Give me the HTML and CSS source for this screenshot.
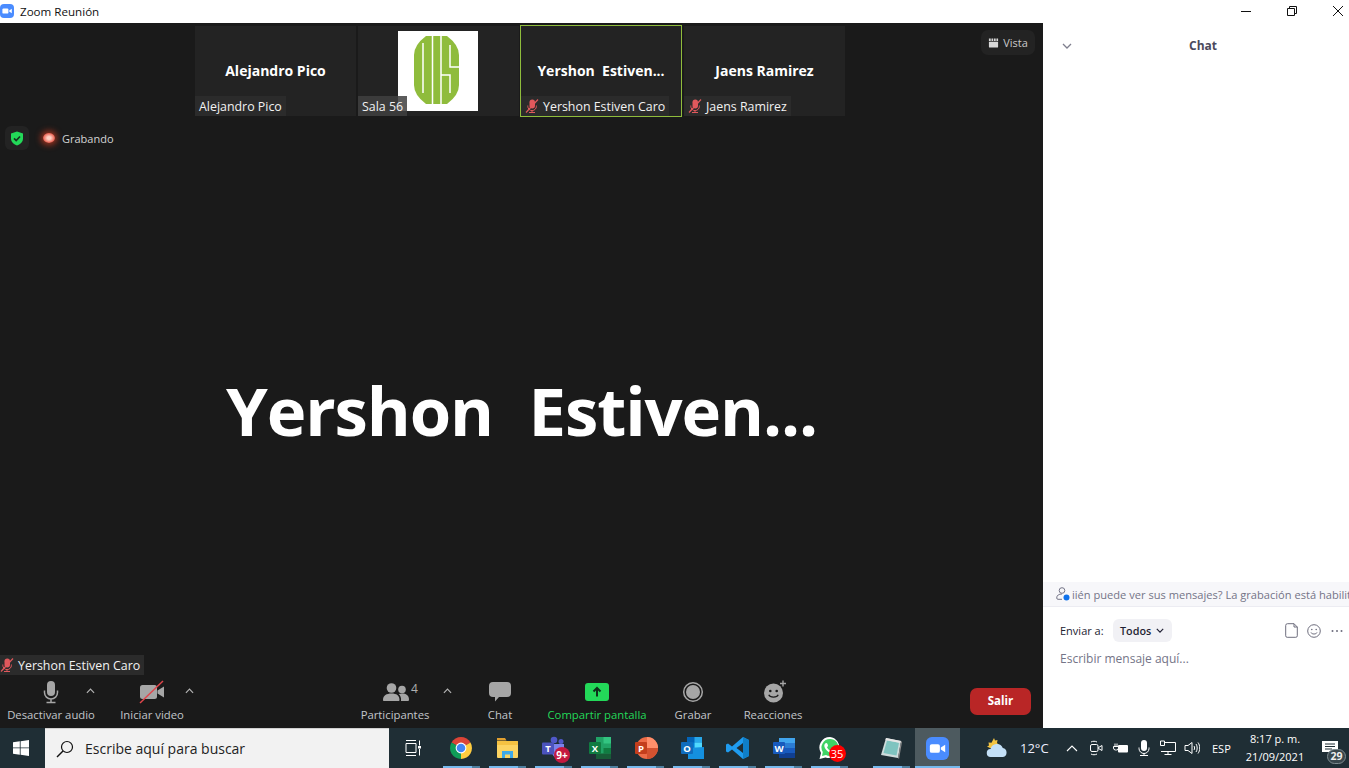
FILE: index.html
```html
<!DOCTYPE html>
<html lang="es">
<head>
<meta charset="utf-8">
<title>Zoom Reunión</title>
<link rel="stylesheet" href="styles.css">
</head>
<body>
<div class="app">
  <header class="titlebar">
    <svg class="app-icon" viewBox="0 0 14 14"><rect width="14" height="14" rx="4" fill="#4a8cff"/><rect x="2.4" y="4.4" width="6" height="5.2" rx="1.2" fill="#fff"/><path d="M9.2 6.5l2.6-1.7v4.4L9.2 7.5z" fill="#fff"/></svg>
    <span class="title-text">Zoom Reunión</span>
    <div class="win-controls">
      <svg class="win-btn" viewBox="0 0 12 12"><path d="M1 6.5h10" stroke="#111" fill="none"/></svg>
      <svg class="win-btn" viewBox="0 0 12 12"><path d="M1.5 3.5h7v7h-7zM3.5 3.500v-2h7v7h-2" stroke="#111" fill="none"/></svg>
      <svg class="win-btn" viewBox="0 0 12 12"><path d="M1 1l10 10M11 1L1 11" stroke="#111" fill="none"/></svg>
    </div>
  </header>

  <main class="main">
    <section class="stage">
      <div class="strip">
        <div class="thumb">
          <div class="thumb-name">Alejandro Pico</div>
          <div class="tag">Alejandro Pico</div>
        </div>
        <div class="thumb">
          <svg class="logo" viewBox="0 0 80 80">
            <rect width="80" height="80" fill="#fff"/>
            <path d="M28 5H49Q61 14 61 24V54Q61 64 49 73H28Q16 64 16 54V24Q16 14 28 5Z" fill="#8fbc3c"/>
            <path d="M25 12V62M34.500 4V74M43 4V74M52 14V36H62M43 44H52V62" fill="none" stroke="#fff" stroke-width="1.500"/>
          </svg>
          <div class="tag tag-glass">Sala 56</div>
        </div>
        <div class="thumb thumb-active">
          <div class="thumb-name">Yershon&nbsp; Estiven...</div>
          <div class="tag"><svg class="muted" viewBox="0 0 14 14"><rect x="4.500" y="0.500" width="5.500" height="9" rx="2.700" fill="#e0585c"/><path d="M2.800 6.500v.8a4.300 4.300 0 0 0 8.600 0v-.8M7 11.500v1.800M4 13.500h6" fill="none" stroke="#e0585c"/><path d="M13 0.500L1 13.500" stroke="#e0585c" stroke-width="1.200"/></svg>Yershon Estiven Caro</div>
        </div>
        <div class="thumb">
          <div class="thumb-name">Jaens Ramirez</div>
          <div class="tag"><svg class="muted" viewBox="0 0 14 14"><rect x="4.500" y="0.500" width="5.500" height="9" rx="2.700" fill="#e0585c"/><path d="M2.800 6.500v.8a4.300 4.300 0 0 0 8.600 0v-.8M7 11.500v1.800M4 13.500h6" fill="none" stroke="#e0585c"/><path d="M13 0.500L1 13.500" stroke="#e0585c" stroke-width="1.200"/></svg>Jaens Ramirez</div>
        </div>
      </div>

      <button class="vista">
        <svg class="vista-icon" viewBox="0 0 12 10"><path d="M1 3.500h10V9a1 1 0 0 1-1 1H2a1 1 0 0 1-1-1zM1 0h2v2.700H1zM3.800 0h1.900v2.700H3.800zM6.500 0h1.900v2.700H6.500zM9.200 0H11v2.700H9.200z" fill="#d8d8d8"/></svg>Vista
      </button>

      <div class="status">
        <div class="shield-box">
          <svg class="shield" viewBox="0 0 14 15"><path d="M7 .5L13 2.500V7.500C13 11 10 13.500 7 14.500 4 13.500 1 11 1 7.500V2.500Z" fill="#23d959"/><path d="M4 7.300l2.200 2.200 3.800-4" fill="none" stroke="#16341f" stroke-width="1.700"/></svg>
        </div>
        <span class="rec-dot"></span>
        <span class="rec-text">Grabando</span>
      </div>

      <div class="speaker"><span class="speaker-name">Yershon&nbsp; Estiven...</span></div>

      <div class="tag tag-self"><svg class="muted" viewBox="0 0 14 14"><rect x="4.500" y="0.500" width="5.500" height="9" rx="2.700" fill="#e0585c"/><path d="M2.800 6.500v.8a4.300 4.300 0 0 0 8.600 0v-.8M7 11.500v1.800M4 13.500h6" fill="none" stroke="#e0585c"/><path d="M13 0.500L1 13.500" stroke="#e0585c" stroke-width="1.200"/></svg>Yershon Estiven Caro</div>

      <div class="toolbar">
        <div class="tool tool-audio">
          <svg class="tool-icon" viewBox="0 0 26 24"><rect x="9" y="1" width="8" height="15" rx="4" fill="#a6a6a6"/><path d="M6.500 10.500v2a6.500 6.500 0 0 0 13 0v-2M13 19v3M8.500 22.500h9" fill="none" stroke="#a6a6a6" stroke-width="1.500"/></svg>
          <span class="tool-label">Desactivar audio</span>
          <svg class="caret caret-audio" viewBox="0 0 10 6"><path d="M1 5l4-4 4 4" fill="none" stroke="#b4b4b4" stroke-width="1.300"/></svg>
        </div>
        <div class="tool tool-video">
          <svg class="tool-icon" viewBox="0 0 26 24"><rect x="1" y="5" width="17" height="14" rx="2.500" fill="#a6a6a6"/><path d="M18.500 10.500L25 6.500v11l-6.500-4z" fill="#a6a6a6"/><path d="M24 1L1 23" stroke="#e0464c" stroke-width="1.500"/></svg>
          <span class="tool-label">Iniciar video</span>
          <svg class="caret caret-video" viewBox="0 0 10 6"><path d="M1 5l4-4 4 4" fill="none" stroke="#b4b4b4" stroke-width="1.300"/></svg>
        </div>
        <div class="tool tool-people">
          <svg class="tool-icon icon-people" viewBox="0 0 26 24"><circle cx="8.500" cy="8" r="4.800" fill="#a6a6a6"/><circle cx="19" cy="9.500" r="3.800" fill="#a6a6a6"/><path d="M0 20c0-4.500 3.500-6.500 8.500-6.500s8 2 8 6.500c0 .6-.4 1-1 1H1c-.6 0-1-.4-1-1zM18 21c.4-3-.6-5.500-2.300-7 1-.3 2.200-.5 3.300-.5 4 0 7 1.800 7 6 0 1-.5 1.500-1.300 1.500z" fill="#a6a6a6"/></svg>
          <span class="people-count">4</span>
          <span class="tool-label">Participantes</span>
          <svg class="caret caret-people" viewBox="0 0 10 6"><path d="M1 5l4-4 4 4" fill="none" stroke="#b4b4b4" stroke-width="1.300"/></svg>
        </div>
        <div class="tool tool-chat">
          <svg class="tool-icon" viewBox="0 0 26 24"><path d="M6 2h14a4 4 0 0 1 4 4v7a4 4 0 0 1-4 4h-8l-4 4.500V17H6a4 4 0 0 1-4-4V6a4 4 0 0 1 4-4z" fill="#a6a6a6"/></svg>
          <span class="tool-label">Chat</span>
        </div>
        <div class="tool tool-share">
          <svg class="tool-icon" viewBox="0 0 26 24"><rect x="1" y="3" width="24" height="18" rx="3" fill="#23d959"/><path d="M13 16.500V9M9.500 11.500L13 8l3.500 3.500" fill="none" stroke="#0f2e1a" stroke-width="2"/></svg>
          <span class="tool-label label-green">Compartir pantalla</span>
        </div>
        <div class="tool tool-record">
          <svg class="tool-icon" viewBox="0 0 26 24"><circle cx="13" cy="12" r="9.300" fill="none" stroke="#a6a6a6" stroke-width="1.500"/><circle cx="13" cy="12" r="7" fill="#a6a6a6"/></svg>
          <span class="tool-label">Grabar</span>
        </div>
        <div class="tool tool-react">
          <svg class="tool-icon icon-react" viewBox="0 0 26 24"><circle cx="11.500" cy="13" r="9.500" fill="#a6a6a6"/><circle cx="8.300" cy="11" r="1.300" fill="#1a1a1a"/><circle cx="14.700" cy="11" r="1.300" fill="#1a1a1a"/><path d="M6.800 14.800c1.200 3 8.200 3 9.400 0" fill="none" stroke="#1a1a1a" stroke-width="1.300"/><path d="M21 .500v6M18 3.500h6" stroke="#a6a6a6" stroke-width="1.400"/></svg>
          <span class="tool-label">Reacciones</span>
        </div>
        <button class="leave">Salir</button>
      </div>
    </section>

    <aside class="chat">
      <div class="chat-head">
        <svg class="chat-chevron" viewBox="0 0 10 6"><path d="M1 1l4 4 4-4" fill="none" stroke="#7f7f8e" stroke-width="1.300"/></svg>
        <span class="chat-title">Chat</span>
      </div>
      <div class="chat-log"></div>
      <div class="chat-notice">
        <svg class="notice-icon" viewBox="0 0 14 14"><circle cx="6" cy="3.500" r="2.800" fill="none" stroke="#747487"/><path d="M.7 11c0-2.800 2.300-4 5.300-4M.7 11c0 .8.500 1.300 1.300 1.300h4" fill="none" stroke="#747487"/><circle cx="10.500" cy="10.500" r="3" fill="#0e71eb"/></svg>
        <span class="notice-text">iién puede ver sus mensajes? La grabación está habilitada</span>
      </div>
      <div class="chat-send">
        <span class="send-label">Enviar a:</span>
        <span class="send-pill">Todos<svg class="pill-chevron" viewBox="0 0 10 6"><path d="M1 1l4 4 4-4" fill="none" stroke="#1f1f33" stroke-width="1.500"/></svg></span>
        <svg class="send-icon send-file" viewBox="0 0 13 15"><path d="M2.500.7H9L12.300 4v8.800a1.500 1.500 0 0 1-1.500 1.500H2.200A1.500 1.500 0 0 1 .7 12.800V2.500A1.800 1.800 0 0 1 2.500.7zM9 .7V4h3.300" fill="none" stroke="#6e6e7e"/></svg>
        <svg class="send-icon send-smile" viewBox="0 0 14 14"><circle cx="7" cy="7" r="6.300" fill="none" stroke="#6e6e7e"/><circle cx="4.800" cy="5.500" r=".8" fill="#6e6e7e"/><circle cx="9.200" cy="5.500" r=".8" fill="#6e6e7e"/><path d="M4 8.500c.8 2 5.200 2 6 0" fill="none" stroke="#6e6e7e"/></svg>
        <svg class="send-icon send-more" viewBox="0 0 14 14"><circle cx="2.500" cy="7" r="1" fill="#6e6e7e"/><circle cx="7" cy="7" r="1" fill="#6e6e7e"/><circle cx="11.500" cy="7" r="1" fill="#6e6e7e"/></svg>
      </div>
      <div class="chat-input">Escribir mensaje aquí...</div>
    </aside>
  </main>

  <footer class="taskbar">
    <div class="start">
      <svg class="win-logo" viewBox="0 0 16 16"><path d="M0 2.300L6.800 1.300V7.500H0zM7.600 1.200L16 0V7.500H7.600zM0 8.300H6.800V14.700L0 13.700zM7.600 8.300H16V16L7.600 14.800z" fill="#fff"/></svg>
    </div>
    <div class="search">
      <svg class="search-icon" viewBox="0 0 18 18"><circle cx="11" cy="7" r="5.500" fill="none" stroke="#111" stroke-width="1.200"/><path d="M7 11l-6 6" stroke="#111" stroke-width="1.400"/></svg>
      <span class="search-text">Escribe aquí para buscar</span>
    </div>
    <div class="task-cell task-view">
      <svg class="task-icon-sm" viewBox="0 0 16 16"><path d="M1 .5h10M1 15.500h10M1 3.500h10v9H1zM14.500 .5v5M14.500 9v6.500" fill="none" stroke="#fff"/><rect x="13" y="6" width="3" height="2.500" fill="#fff"/></svg>
    </div>
    <div class="task-cell task-first">
      <svg class="task-icon" viewBox="0 0 24 24"><path d="M12 12L2.500 6.500A11 11 0 0 1 21.500 6.500Z" fill="#db4437"/><path d="M12 12L2.500 6.500A11 11 0 0 0 12 23Z" fill="#0f9d58"/><path d="M12 12L21.500 6.500A11 11 0 0 1 12 23Z" fill="#ffcd40"/><circle cx="12" cy="12" r="5.400" fill="#fff"/><circle cx="12" cy="12" r="4.300" fill="#4285f4"/></svg>
      <span class="run-line"></span>
    </div>
    <div class="task-cell">
      <svg class="task-icon" viewBox="0 0 24 24"><path d="M2 2h8l1.500 2.500H2z" fill="#e0a030"/><path d="M2 5h20a1 1 0 0 1 1 1v15a1 1 0 0 1-1 1H3a1 1 0 0 1-1-1z" fill="#fcd462"/><path d="M2 9h21v-3a1 1 0 0 0-1-1H2z" fill="#f5c242"/><path d="M7 15h11v7h-3v-3.500h-5V22H7z" fill="#3fa9e8"/></svg>
      <span class="run-line"></span>
    </div>
    <div class="task-cell">
      <span class="badged">
        <svg class="task-icon" viewBox="0 0 24 24"><circle cx="13" cy="4" r="3.300" fill="#5059c9"/><circle cx="20" cy="5.500" r="2.500" fill="#5059c9"/><path d="M9 8h14v8a6 6 0 0 1-12 0z" fill="#7b83eb"/><rect x="1" y="6.500" width="12" height="12" rx="1" fill="#4b53bc"/><text x="7" y="16.200" class="letter">T</text></svg>
        <span class="badge badge-teams">9+</span>
      </span>
      <span class="run-line"></span>
    </div>
    <div class="task-cell task-shift">
      <svg class="task-icon" viewBox="0 0 24 24"><path d="M8 1h15v22H8z" fill="#21a366"/><path d="M15.500 1H23v6.500h-7.500z" fill="#33c481"/><path d="M15.500 12H23v5.500h-7.500z" fill="#107c41"/><path d="M8 17.500H23V23H8z" fill="#185c37"/><rect x="1" y="6" width="12" height="12" rx="1" fill="#107c41"/><text x="7" y="15.700" class="letter">X</text></svg>
      <span class="run-line"></span>
    </div>
    <div class="task-cell task-shift">
      <svg class="task-icon" viewBox="0 0 24 24"><circle cx="13" cy="12" r="11" fill="#ed6c47"/><path d="M13 1a11 11 0 0 1 11 11H13z" fill="#ff8f6b"/><path d="M13 12h11a11 11 0 0 1-11 11z" fill="#d35230"/><rect x="1" y="6" width="12" height="12" rx="1" fill="#c43e1c"/><text x="7" y="15.700" class="letter">P</text></svg>
      <span class="run-line"></span>
    </div>
    <div class="task-cell task-shift">
      <svg class="task-icon" viewBox="0 0 24 24"><path d="M7 1h15v11H7z" fill="#0364b8"/><path d="M14.500 1H22v5.500h-7.500z" fill="#28a8ea"/><path d="M7 6.500h7.500V12H7z" fill="#0078d4"/><path d="M14.500 6.500H22V12h-7.500z" fill="#50d9ff"/><path d="M8 12l16-1v12H8z" fill="#1490df"/><rect x="1" y="6" width="12" height="12" rx="1" fill="#0f6cbd"/><text x="7" y="15.700" class="letter">O</text></svg>
      <span class="run-line"></span>
    </div>
    <div class="task-cell task-shift">
      <svg class="task-icon" viewBox="0 0 24 24"><path d="M17 1l6 3v16l-6 3L6 13.500 2 16.500 0 15.500V8.500L2 7.500l4 3zM17 7l-6.500 5 6.500 5z" fill="#1f9cf0"/><path d="M17 1l6 3v16l-6 3z" fill="#0f7fc9"/></svg>
      <span class="run-line"></span>
    </div>
    <div class="task-cell task-shift">
      <svg class="task-icon" viewBox="0 0 24 24"><path d="M7 2h16v20H7z" fill="#2b7cd3"/><path d="M7 2h16v5H7z" fill="#41a5ee"/><path d="M7 12h16v5H7z" fill="#185abd"/><path d="M7 17h16v5H7z" fill="#103f91"/><rect x="1" y="6" width="12" height="12" rx="1" fill="#185abd"/><text x="7" y="15.700" class="letter">W</text></svg>
      <span class="run-line"></span>
    </div>
    <div class="task-cell task-shift">
      <span class="badged">
        <svg class="task-icon" viewBox="0 0 24 24"><path d="M12 1a10.500 10.500 0 0 0-9 16L1.500 23l6-1.600A10.500 10.500 0 1 0 12 1z" fill="#fff"/><path d="M12 3a8.500 8.500 0 0 0-7.200 13L4 20l4-1A8.500 8.500 0 1 0 12 3z" fill="#3fd365"/><path d="M8.500 7c1 0 1.500 2.500 1.500 3l-1 1.200c.6 1.400 1.800 2.600 3.300 3.300l1.200-1c.5 0 3 .7 3 1.500 0 1.500-1.500 2.300-2.800 2.200C10.500 17 6.500 13 6.300 9.800 6.300 8.500 7 7 8.500 7z" fill="#fff"/></svg>
        <span class="badge badge-wa">35</span>
      </span>
      <span class="run-line"></span>
    </div>
    <div class="task-cell task-gap">
      <svg class="task-icon" viewBox="0 0 24 24"><path d="M7 2l15 3-3 17L2 19z" fill="#cfdcdc"/><path d="M8 4.500l12 2.300-2.500 12.700L4.500 17z" fill="#7fc4c0"/><path d="M7 2l15 3-.4 2L6.500 4z" fill="#e6e6e6"/><path d="M19 22l3-17 1 1-3 17z" fill="#8a8a8a"/></svg>
      <span class="run-line"></span>
    </div>
    <div class="task-cell task-zoom">
      <svg class="task-icon task-icon-zoom" viewBox="0 0 24 24"><rect width="24" height="24" rx="6" fill="#4a8cff"/><rect x="4" y="7.500" width="10.500" height="9" rx="2" fill="#fff"/><path d="M15.500 11l4.500-3v8l-4.500-3z" fill="#fff"/></svg>
      <span class="run-line run-full"></span>
    </div>

    <div class="tray">
      <svg class="tray-weather" viewBox="0 0 24 20"><path d="M9 0l1 2.500 2.500-.5-.5 3 2 2-4 3H5L2 8.500l2-1-.5-3 3 .3z" fill="#f5c542"/><path d="M6 19a4 4 0 0 1-.5-8 6.500 6.500 0 0 1 12.300-1A4.600 4.600 0 0 1 18 19z" fill="#c4e0f7"/></svg>
      <span class="tray-temp">12°C</span>
      <svg class="tray-caret" viewBox="0 0 12 7"><path d="M1 6l5-5 5 5" fill="none" stroke="#fff" stroke-width="1.100"/></svg>
      <svg class="tray-icon" viewBox="0 0 16 16"><rect x="2.500" y="4.500" width="7.500" height="7" rx="1.500" fill="none" stroke="#fff"/><path d="M10.500 7.500l3.500-2v5l-3.500-2zM3 2c1.500-1 4.500-1 6 0M3 14c1.500 1 4.500 1 6 0" fill="none" stroke="#fff"/></svg>
      <svg class="tray-icon" viewBox="0 0 16 16"><path d="M3 3.500v3M5 3.500v3M1.500 6.500h5v1.500a2 2 0 0 1-2 2H3.500a2 2 0 0 1-2-2z" fill="none" stroke="#fff"/><rect x="6" y="5" width="10" height="7.500" rx="1" fill="#fff"/></svg>
      <svg class="tray-icon" viewBox="0 0 16 16"><rect x="5" y="0" width="6" height="11" rx="3" fill="#fff"/><path d="M3 7.500v1a5 5 0 0 0 10 0v-1M8 13v2M4 15.500h8" fill="none" stroke="#fff"/></svg>
      <svg class="tray-icon" viewBox="0 0 16 16"><path d="M5 2.500h10.500v9H1M8 11.500v3M4.500 14.500h7M.5 1h4v4.500h-4z" fill="none" stroke="#fff"/></svg>
      <svg class="tray-icon" viewBox="0 0 16 16"><path d="M1 5.500h3l4-3v11l-4-3H1zM10 6c.8 1 .8 3 0 4M12 4c1.600 2 1.600 6 0 8M14 2.500c2.300 3 2.300 8 0 11" fill="none" stroke="#fff"/></svg>
      <span class="tray-lang">ESP</span>
      <div class="clock"><span>8:17 p. m.</span><span>21/09/2021</span></div>
      <div class="notif">
        <svg class="notif-icon" viewBox="0 0 16 16"><path d="M0 1h16v11h-5l-3 3v-3H0z" fill="#fff"/><path d="M3 4h10M3 6.500h10M3 9h7" stroke="#1f2e35"/></svg>
        <span class="notif-count">29</span>
      </div>
    </div>
  </footer>
</div>
</body>
</html>
```
FILE: styles.css
```css
* { box-sizing: border-box; }
html, body { margin: 0; height: 100%; overflow: hidden; }
body { font-family: "Open Sans", "Noto Sans", sans-serif; }
svg { display: block; flex: none; }
button { font: inherit; border: 0; padding: 0; }

.app { width: 1349px; height: 768px; display: flex; flex-direction: column; }

/* Title bar */
.titlebar { height: 23px; background: #fff; display: flex; align-items: center; flex: none; }
.app-icon { width: 14px; height: 14px; margin-bottom: 1px; }
.title-text { margin-left: 6px; font-size: 11.600px; color: #111; }
.win-controls { margin-left: auto; display: flex; align-items: center; gap: 34px; padding-right: 5px; }
.win-btn { width: 12px; height: 12px; margin-bottom: 2px; }

/* Main */
.main { flex: 1; display: flex; min-height: 0; }
.stage { width: 1043px; background: #1a1a1a; display: flex; flex-direction: column; position: relative; }

.strip { display: flex; justify-content: center; gap: 2px; padding: 3px 3px 0 0; }
.thumb { width: 161px; height: 90px; background: #232323; position: relative; display: flex; align-items: center; justify-content: center; }
.thumb-active { width: 160px; margin-right: 1px; outline: 1px solid #8fbc3c; }
.thumb-name { color: #fff; font-size: 14px; font-weight: 700; white-space: nowrap; padding-bottom: 2px; }
.logo { width: 80px; height: 80px; margin-right: 1px; }
.tag { display: flex; align-items: center; height: 20px; padding: 0 4px; background: #2b2b2b; color: #f2f2f2; font-size: 12.400px; white-space: nowrap; }
.thumb .tag { position: absolute; left: 0; bottom: 0; }
.tag-glass { background: rgba(64, 64, 64, .85); }
.muted { width: 14px; height: 14px; margin-right: 4px; }
.tag-self { align-self: flex-start; padding: 0 4px 0 0; }

.vista { position: absolute; top: 7px; left: 981px; width: 54px; height: 25px; border-radius: 7px; background: #232323; color: #c9c9c9; font-size: 11px; display: flex; align-items: center; justify-content: center; gap: 4px; }
.vista-icon { width: 11px; height: 10px; }

.status { display: flex; align-items: center; margin-top: 10px; padding-left: 5px; height: 24px; flex: none; }
.shield-box { width: 24px; height: 24px; background: #232323; border-radius: 6px; display: flex; align-items: center; justify-content: center; }
.shield { width: 14px; height: 15px; }
.rec-dot { width: 12px; height: 10px; margin-left: 14px; border-radius: 50%; background: radial-gradient(ellipse, #ffd0c4 0 20%, #e8503f 75%); box-shadow: 0 0 6px 2px #a8341f; }
.rec-text { margin-left: 7px; font-size: 11px; color: #d4d4d4; }

.speaker { flex: 1; display: flex; align-items: center; justify-content: center; padding-top: 15px; min-height: 0; }
.speaker-name { color: #fff; font-size: 67px; font-weight: 700; letter-spacing: -1.100px; word-spacing: 1.500px; white-space: nowrap; line-height: 1; }

/* Toolbar */
.toolbar { height: 53px; flex: none; position: relative; display: flex; }
.tool { position: absolute; top: 0; display: flex; flex-direction: column; align-items: center; width: 0; }
.tool-icon { width: 26px; height: 24px; margin-top: 5px; }
.icon-react { margin-left: 4px; }
.icon-people { margin-left: 1px; }
.tool-label { margin-top: 3px; font-size: 11.300px; color: #c2c6ca; white-space: nowrap; line-height: 16px; }
.label-green { color: #23d959; }
.tool-audio { left: 51px; }
.tool-video { left: 152px; }
.tool-people { left: 395px; }
.tool-chat { left: 500px; }
.tool-share { left: 597px; }
.tool-record { left: 693px; }
.tool-react { left: 773px; }
.caret { position: absolute; top: 13px; width: 9px; height: 6px; }
.caret-audio { left: 35px; }
.caret-video { left: 33px; }
.caret-people { left: 48px; }
.people-count { position: absolute; left: 16px; top: 5px; font-size: 12px; color: #b0b0b0; }
.leave { position: absolute; left: 970px; top: 13px; width: 61px; height: 27px; padding-bottom: 2px; border-radius: 7px; background: #b92626; color: #fff; font-size: 11.500px; font-weight: 700; }

/* Chat */
.chat { flex: 1; background: #fff; display: flex; flex-direction: column; min-width: 0; overflow: hidden; }
.chat-head { height: 44px; flex: none; display: flex; align-items: center; position: relative; justify-content: center; }
.chat-chevron { position: absolute; left: 19px; top: 20px; width: 10px; height: 6px; }
.chat-title { font-size: 12px; font-weight: 700; color: #4a4a5c; padding-left: 14px; }
.chat-log { flex: 1; min-height: 0; }
.chat-notice { height: 25px; flex: none; background: #f7f7fa; border-bottom: 1px solid #ececf2; display: flex; align-items: center; padding-left: 13px; overflow: hidden; white-space: nowrap; }
.notice-icon { width: 14px; height: 14px; }
.notice-text { margin-left: 2px; font-size: 11.100px; color: #747487; }
.chat-send { display: flex; align-items: center; padding: 12px 5px 0 17px; flex: none; }
.send-label { font-size: 11px; color: #222230; }
.send-pill { margin-left: 9px; width: 59px; height: 23px; border-radius: 6px; background: #f1f1f5; display: flex; align-items: center; justify-content: center; gap: 5px; font-size: 10.800px; font-weight: 600; color: #1f1f33; }
.pill-chevron { width: 8px; height: 5px; }
.send-icon { width: 14px; height: 14px; }
.send-file { margin-left: auto; width: 13px; height: 15px; }
.send-smile { margin-left: 9px; }
.send-more { margin-left: 9px; }
.chat-input { padding: 8px 0 0 17px; height: 86px; flex: none; font-size: 12px; color: #747487; }

/* Taskbar */
.taskbar { height: 40px; flex: none; background: #1f2e35; display: flex; align-items: stretch; }
.start { width: 45px; display: flex; align-items: center; justify-content: center; padding-right: 3px; }
.win-logo { width: 16px; height: 16px; }
.search { width: 344px; background: #f2f2f2; display: flex; align-items: center; padding-left: 11px; border-top: 1px solid #d0d0d0; }
.search-icon { width: 18px; height: 18px; }
.search-text { margin-left: 11px; font-size: 14px; color: #222; }
.task-cell { width: 46px; display: flex; flex-direction: column; align-items: center; justify-content: flex-end; position: relative; }
.task-view { margin-left: 1px; }
.task-first { margin-left: 2px; }
.task-gap { margin-left: 16px; }
.task-zoom { margin-left: 1px; width: 45px; background: #4d5a5f; }
.task-icon { width: 24px; height: 24px; margin-bottom: 6px; }
.task-icon-zoom { width: 23px; height: 23px; }
.task-icon-sm { width: 16px; height: 16px; position: absolute; top: 12px; }
.task-shift .task-icon { margin-left: 1px; }
.run-line { width: 37px; height: 2px; background: linear-gradient(90deg, #76b9ed 78%, #4e7f9f 78%); }
.run-full { width: 45px; background: #76b9ed; }
.badged { position: relative; display: block; }
.badge { position: absolute; color: #fff; border-radius: 50%; font-size: 11px; display: flex; align-items: center; justify-content: center; width: 16px; height: 16px; }
.badge-teams { right: -5px; top: 11px; background: #c4193f; font-size: 10px; font-weight: 700; }
.badge-wa { right: -4px; top: 9px; background: #f00; width: 17px; height: 17px; }
.letter { font-size: 9.500px; font-weight: 700; fill: #fff; text-anchor: middle; font-family: "Open Sans", sans-serif; }

.tray { flex: 1; display: flex; align-items: center; color: #fff; position: relative; }
.tray-weather { width: 24px; height: 20px; margin-left: 25px; }
.tray-temp { margin-left: 11px; font-size: 13px; color: #eef; width: 30px; white-space: nowrap; }
.tray-caret { width: 12px; height: 7px; margin-left: 16px; }
.tray-icon { width: 16px; height: 16px; margin-left: 8px; }
.tray-caret + .tray-icon { margin-left: 10px; }
.tray-lang { margin-left: 12px; width: 20px; font-size: 11px; white-space: nowrap; }
.clock { margin-left: 11px; width: 64px; display: flex; flex-direction: column; align-items: center; font-size: 11px; line-height: 18px; white-space: nowrap; }
.notif { position: relative; margin-left: 15px; width: 20px; height: 20px; }
.notif-icon { width: 16px; height: 16px; margin-top: 2px; }
.notif-count { position: absolute; left: 5px; top: 11px; width: 19px; height: 15px; border-radius: 8px; background: #39464c; border: 1px solid #7d8a8f; font-size: 10.500px; font-weight: 700; line-height: 13px; text-align: center; color: #eee; }
```
